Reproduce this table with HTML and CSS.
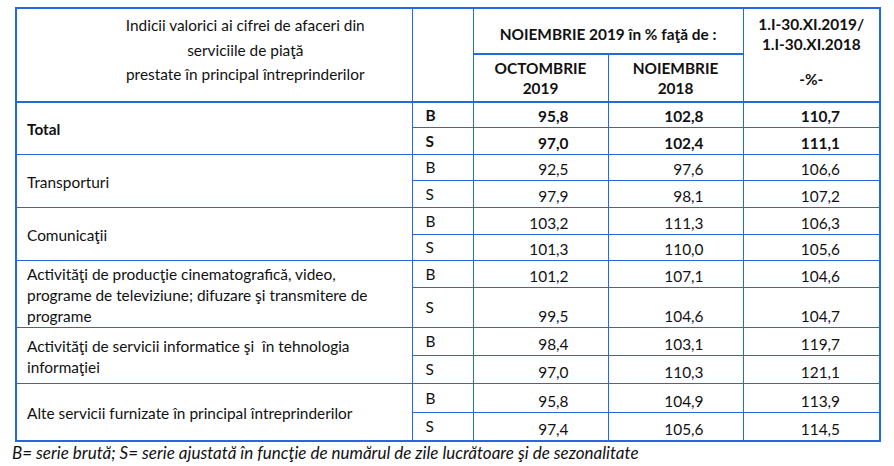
FILE: index.html
```html
<!DOCTYPE html>
<html lang="ro">
<head>
<meta charset="utf-8">
<title>Indicii valorici ai cifrei de afaceri</title>
<link rel="stylesheet" href="styles.css">
</head>
<body>
<table class="data">
  <colgroup>
    <col class="c-label"><col class="c-ser"><col class="c-num"><col class="c-num"><col class="c-num3">
  </colgroup>
  <tr class="h1">
    <td class="title" rowspan="2">Indicii valorici ai cifrei de afaceri din<br>serviciile de piaţă<br>prestate în principal întreprinderilor</td>
    <td class="ser" rowspan="2"></td>
    <th colspan="2" class="hd">NOIEMBRIE 2019 în % faţă de :</th>
    <th rowspan="2" class="hd cum"><span class="cum-top">1.I-30.XI.2019/<br>1.I-30.XI.2018</span><span class="cum-pct">-%-</span></th>
  </tr>
  <tr class="h2">
    <th class="hd">OCTOMBRIE<br>2019</th>
    <th class="hd">NOIEMBRIE<br>2018</th>
  </tr>

  <tr class="r25 bold">
    <td class="lbl" rowspan="2">Total</td>
    <td class="ser">B</td><td class="num">95,8</td><td class="num">102,8</td><td class="num">110,7</td>
  </tr>
  <tr class="r27 bold">
    <td class="ser">S</td><td class="num">97,0</td><td class="num">102,4</td><td class="num">111,1</td>
  </tr>

  <tr class="r26">
    <td class="lbl" rowspan="2">Transporturi</td>
    <td class="ser">B</td><td class="num">92,5</td><td class="num">97,6</td><td class="num">106,6</td>
  </tr>
  <tr class="r27">
    <td class="ser">S</td><td class="num">97,9</td><td class="num">98,1</td><td class="num">107,2</td>
  </tr>

  <tr class="r27">
    <td class="lbl" rowspan="2">Comunicaţii</td>
    <td class="ser">B</td><td class="num">103,2</td><td class="num">111,3</td><td class="num">106,3</td>
  </tr>
  <tr class="r26">
    <td class="ser">S</td><td class="num">101,3</td><td class="num">110,0</td><td class="num">105,6</td>
  </tr>

  <tr class="r27">
    <td class="lbl top" rowspan="2">Activităţi de producţie cinematografică, video, programe de televiziune; difuzare şi transmitere de programe</td>
    <td class="ser">B</td><td class="num">101,2</td><td class="num">107,1</td><td class="num">104,6</td>
  </tr>
  <tr class="r40">
    <td class="ser">S</td><td class="num">99,5</td><td class="num">104,6</td><td class="num">104,7</td>
  </tr>

  <tr class="r28">
    <td class="lbl" rowspan="2">Activităţi de servicii informatice şi&nbsp; în tehnologia informaţiei</td>
    <td class="ser">B</td><td class="num">98,4</td><td class="num">103,1</td><td class="num">119,7</td>
  </tr>
  <tr class="r28">
    <td class="ser">S</td><td class="num">97,0</td><td class="num">110,3</td><td class="num">121,1</td>
  </tr>

  <tr class="r29">
    <td class="lbl" rowspan="2">Alte servicii furnizate în principal întreprinderilor</td>
    <td class="ser">B</td><td class="num">95,8</td><td class="num">104,9</td><td class="num">113,9</td>
  </tr>
  <tr class="r29">
    <td class="ser">S</td><td class="num">97,4</td><td class="num">105,6</td><td class="num">114,5</td>
  </tr>
</table>
<p class="note">B= serie brută; S= serie ajustată în funcţie de numărul de zile lucrătoare şi de sezonalitate</p>
</body>
</html>
```

FILE: styles.css
```css
html, body {
  margin: 0;
  padding: 0;
  background: #ffffff;
}

body {
  font-family: "Lato", "Liberation Sans", sans-serif;
  font-size: 15.4px;
  color: #111111;
}

.data {
  border-collapse: collapse;
  margin: 7px 0 0 15px;
  width: 866px;
  table-layout: fixed;
  border: 2px solid #2468e2;
}

.c-label { width: 396px; }
.c-ser { width: 61px; }
.c-num { width: 135px; }
.c-num3 { width: 137px; }

.data td, .data th {
  border: 1px solid #2468e2;
  padding: 0;
  line-height: 20px;
}

.data .h1 { height: 46px; }
.data .h2 { height: 48px; }
.data .h1 th { border-bottom: 2px solid #2468e2; }
.data .h2 th,
.data .title,
.data .h1 .ser { border-bottom: 2px solid #2468e2; }

.data .title {
  text-align: center;
  vertical-align: top;
  padding: 4px 8px 0 70px;
  line-height: 24.5px;
  font-weight: normal;
}

.data .hd {
  font-weight: bold;
  text-align: center;
  vertical-align: middle;
  line-height: 20px;
}

.data .h1 .hd { padding-top: 5px; }

.data .cum {
  vertical-align: top;
  padding-top: 6px;
}
.cum-top { display: block; line-height: 20px; }
.cum-pct { display: block; margin-top: 15px; }

.r25 { height: 25px; }
.r26 { height: 26px; }
.r27 { height: 27px; }
.r28 { height: 28px; }
.r29 { height: 29px; }
.r40 { height: 40px; }

.data .bold td { font-weight: bold; }

.data .lbl {
  vertical-align: middle;
  padding: 3px 10px 0 10px;
  line-height: 21px;
}
.data .lbl.top {
  vertical-align: top;
  padding-top: 3px;
}

.data .ser {
  vertical-align: middle;
  padding-left: 13px;
}

.data .num {
  text-align: right;
  vertical-align: bottom;
  padding: 0 39px 1px 0;
}

.note {
  margin: 1px 0 0 12px;
  font-style: italic;
  font-size: 17px;
  line-height: 20px;
}
```
